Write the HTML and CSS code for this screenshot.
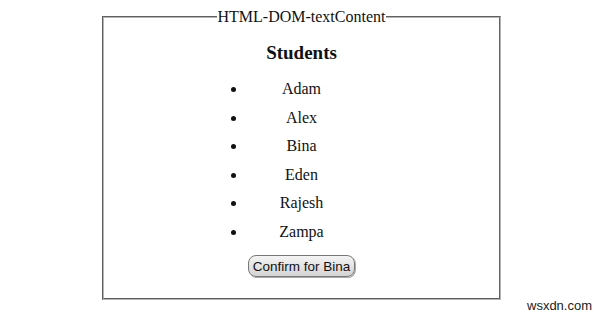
FILE: index.html
```html
<!DOCTYPE html>
<html>
<head>
<meta charset="utf-8">
<link rel="stylesheet" href="styles.css">
</head>
<body>
<fieldset class="box">
  <legend class="legend">HTML-DOM-textContent</legend>
  <h3 class="title">Students</h3>
  <ul class="list">
    <li>Adam</li>
    <li>Alex</li>
    <li>Bina</li>
    <li>Eden</li>
    <li>Rajesh</li>
    <li>Zampa</li>
  </ul>
  <button class="btn">Confirm for Bina</button>
</fieldset>
<div class="mark">wsxdn.com</div>
</body>
</html>
```
FILE: styles.css
```css
html, body {
  background: #fff;
}
body {
  margin: 8px 0 0 0;
  font-family: "Liberation Serif", "Times New Roman", serif;
  font-size: 16px;
  color: #111;
}
.box {
  width: 399px;
  height: 292px;
  margin: 0 0 0 102px;
  padding: 0 0 20px 0;
  border: 2px groove #b4b4b4;
  text-align: center;
  box-sizing: border-box;
}
.legend {
  padding: 0 1px;
  margin: 0 auto;
  line-height: 18px;
}
.title {
  font-size: 19px;
  margin: 16px 0 11px 0;
  line-height: 22px;
}
.list {
  width: 110px;
  margin: 0 auto;
  padding: 0;
  list-style: disc outside;
}
.list li {
  line-height: 28.5px;
}
.btn {
  margin-top: 9px;
  font-family: "Liberation Sans", Arial, sans-serif;
  font-size: 13.5px;
  color: #111;
  white-space: nowrap;
  padding: 0 4px;
  height: 22px;
  border: 1px solid #777;
  border-radius: 8px;
  background: linear-gradient(#f4f4f4, #d4d4d4);
  box-shadow: 1px 1px 0 #aaa;
}
.mark {
  position: absolute;
  left: 527px;
  top: 298px;
  font-family: "Liberation Sans", Arial, sans-serif;
  font-size: 13px;
  color: #222;
}
```
